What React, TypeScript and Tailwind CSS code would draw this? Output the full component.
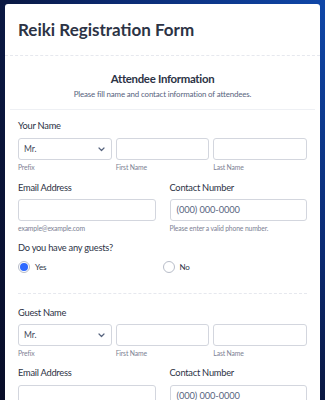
import React from 'react';

const font = { fontFamily: 'Lato, "Open Sans", sans-serif' };

const Input: React.FC<{ placeholder?: string }> = ({ placeholder }) => (
  <div className="h-[22px] rounded-[3px] border border-[#d3d6de] bg-white flex items-center px-[6px] text-[9.3px] tracking-[-0.1px] text-[#57647e]">
    {placeholder}
  </div>
);

const Select: React.FC = () => (
  <div className="h-[22px] rounded-[3px] border border-[#d3d6de] bg-white flex items-center justify-between pl-[5px] pr-[6px] text-[8.5px] text-[#3e4659]">
    <span>Mr.</span>
    <svg width="7" height="5" viewBox="0 0 7 5" fill="none">
      <path d="M1 1l2.5 2.5L6 1" stroke="#57647e" strokeWidth="1.2" strokeLinecap="round" strokeLinejoin="round" />
    </svg>
  </div>
);

const Sub: React.FC<{ children: React.ReactNode }> = ({ children }) => (
  <div className="mt-[1px] leading-[12px] text-[6.8px] tracking-[-0.15px] text-[#7d8294]">{children}</div>
);

const Label: React.FC<{ children: React.ReactNode; className?: string }> = ({ children, className }) => (
  <div className={`leading-[16px] text-[9.3px] tracking-[-0.25px] text-[#2c3345] ${className ?? ''}`}>{children}</div>
);

const NameRow: React.FC = () => (
  <div className="grid grid-cols-3 gap-[4px]">
    <div>
      <Select />
      <Sub>Prefix</Sub>
    </div>
    <div>
      <Input />
      <Sub>First Name</Sub>
    </div>
    <div>
      <Input />
      <Sub>Last Name</Sub>
    </div>
  </div>
);

const Radio: React.FC<{ checked?: boolean; label: string }> = ({ checked, label }) => (
  <div className="flex items-center gap-[5px]">
    {checked ? (
      <div className="w-[12px] h-[12px] rounded-full border border-[#b8bdc9] bg-white flex items-center justify-center">
        <div className="w-[8px] h-[8px] rounded-full bg-[#2e69ff]" />
      </div>
    ) : (
      <div className="w-[12px] h-[12px] rounded-full border border-[#b8bdc9] bg-white" />
    )}
    <span className="text-[8px] tracking-[-0.2px] text-[#2c3345]">{label}</span>
  </div>
);

export default function App() {
  return (
    <div
      style={font}
      className="w-[325px] h-[400px] overflow-hidden bg-[radial-gradient(ellipse_at_top_right,#0f47a8_0%,#0b2a72_45%,#0a1438_75%,#080d28_100%)] pt-[4px] pl-[5px]"
    >
      <div className="w-[315px] bg-white rounded-t-[3px] h-[400px]">
        <div className="h-[51px] flex items-center px-[13px]">
          <h1 className="text-[17px] font-bold text-[#2c3345]">Reiki Registration Form</h1>
        </div>
        <div className="border-b border-dashed border-[#e6e8ee]" />
        <div className="pt-[15px] pb-[8px] text-center">
          <div className="leading-[16px] text-[11.4px] tracking-[-0.3px] font-bold text-[#2c3345]">Attendee Information</div>
          <div className="leading-[14px] text-[7.9px] tracking-[-0.15px] text-[#57647e]">
            Please fill name and contact information of attendees.
          </div>
        </div>
        <div className="mx-[5px] border-b border-[#eef0f4]" />
        <div className="px-[13px]">
          <Label className="mt-[8px]">Your Name</Label>
          <div className="mt-[4px]">
            <NameRow />
          </div>
          <div className="grid grid-cols-2 gap-[14px] mt-[7px]">
            <div>
              <Label>Email Address</Label>
              <div className="mt-[3px]">
                <Input />
              </div>
              <Sub>example@example.com</Sub>
            </div>
            <div>
              <Label>Contact Number</Label>
              <div className="mt-[3px]">
                <Input placeholder="(000) 000-0000" />
              </div>
              <Sub>Please enter a valid phone number.</Sub>
            </div>
          </div>
          <Label className="mt-[6px]">Do you have any guests?</Label>
          <div className="grid grid-cols-2 mt-[3px] h-[16px] items-center">
            <Radio checked label="Yes" />
            <Radio label="No" />
          </div>
          <div className="mt-[18px] border-b border-dashed border-[#e6e8ee]" />
          <Label className="mt-[11px]">Guest Name</Label>
          <div className="mt-[3px]">
            <NameRow />
          </div>
          <div className="grid grid-cols-2 gap-[14px] mt-[6px]">
            <div>
              <Label>Email Address</Label>
              <div className="mt-[4px]">
                <Input />
              </div>
            </div>
            <div>
              <Label>Contact Number</Label>
              <div className="mt-[4px]">
                <Input placeholder="(000) 000-0000" />
              </div>
            </div>
          </div>
        </div>
      </div>
    </div>
  );
}
